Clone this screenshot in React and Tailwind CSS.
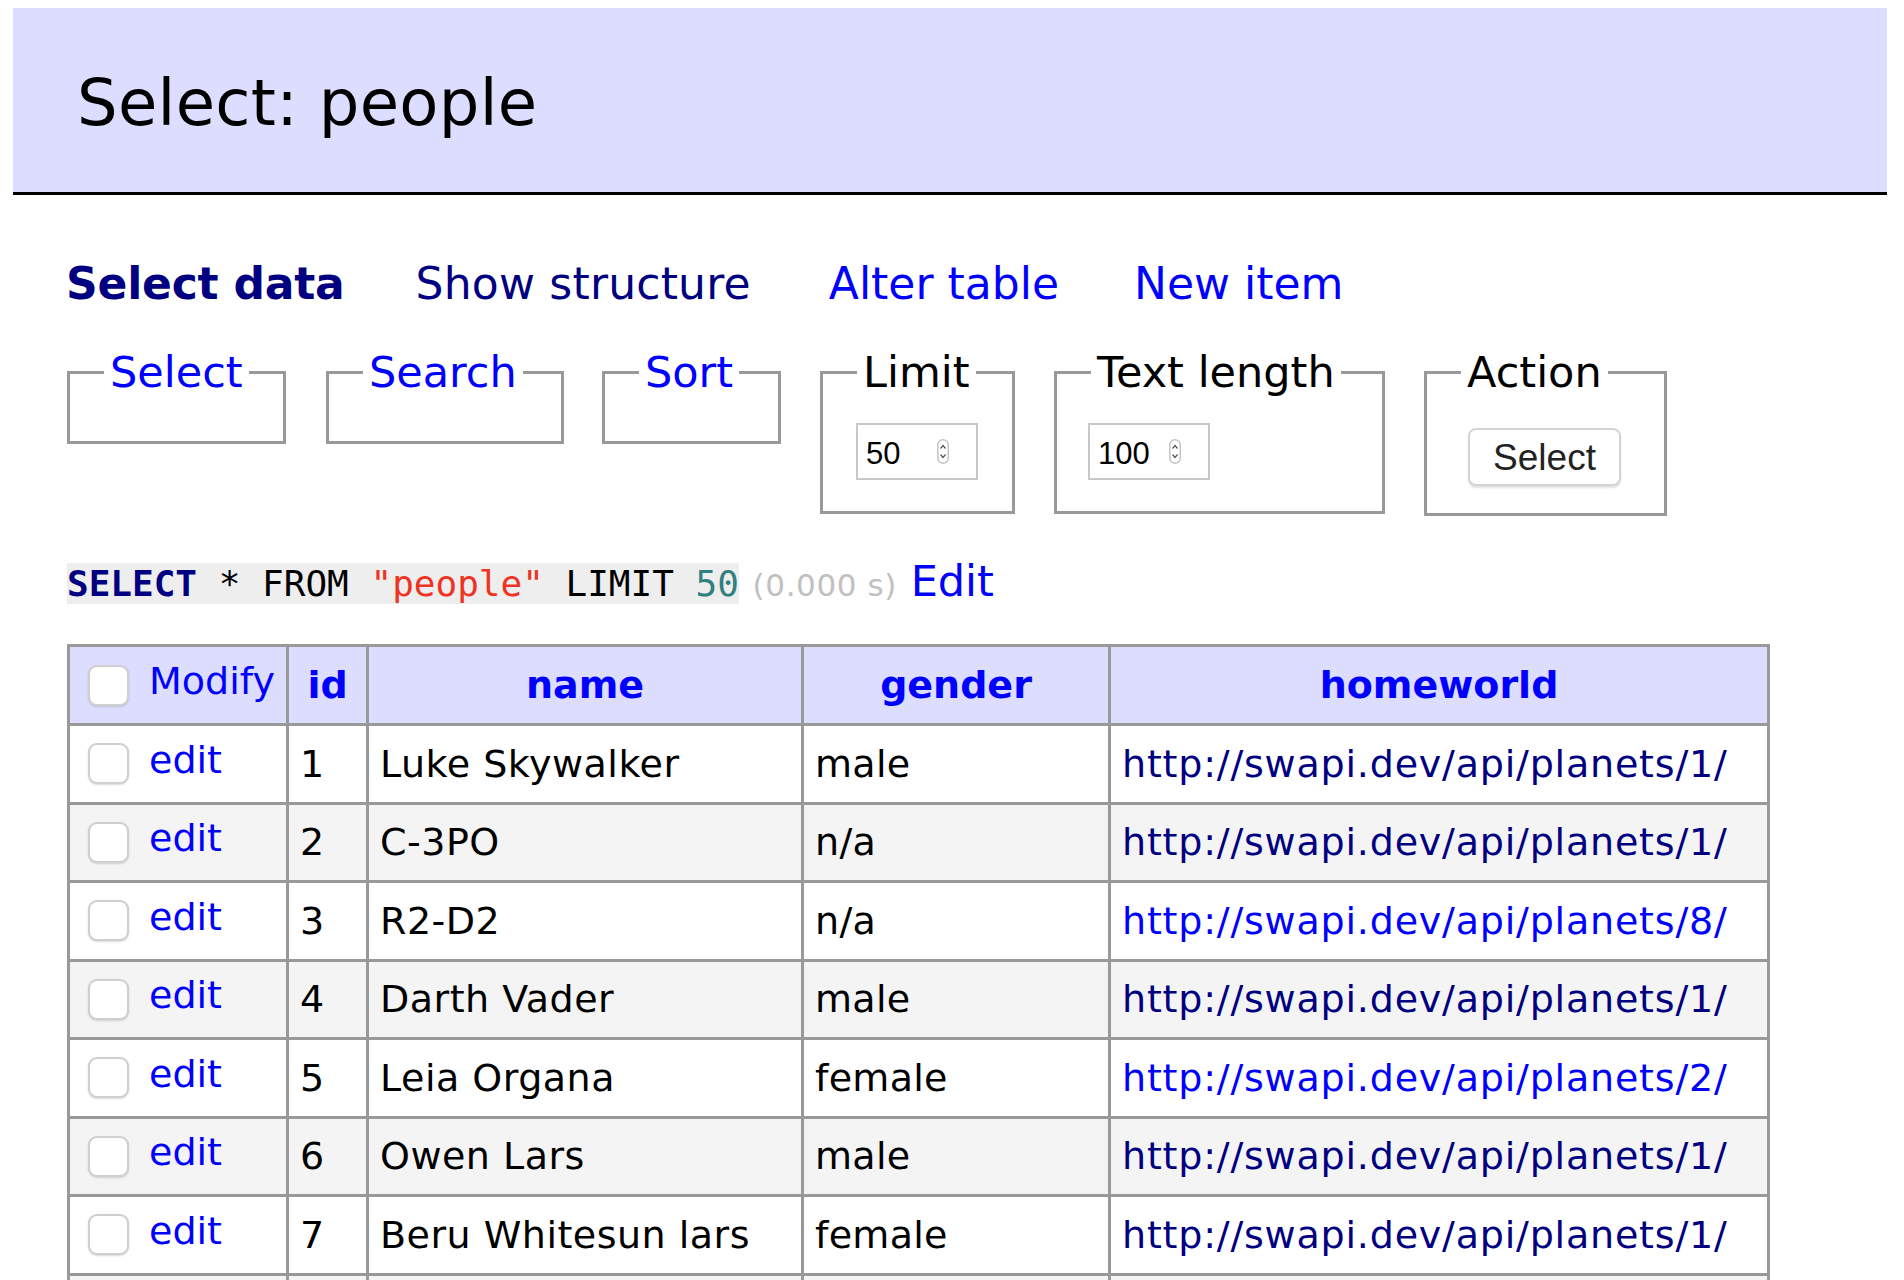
import React from 'react';

const rows = [
  { id: 1, name: 'Luke Skywalker', gender: 'male', planet: 1, visited: true },
  { id: 2, name: 'C-3PO', gender: 'n/a', planet: 1, visited: true },
  { id: 3, name: 'R2-D2', gender: 'n/a', planet: 8, visited: false },
  { id: 4, name: 'Darth Vader', gender: 'male', planet: 1, visited: true },
  { id: 5, name: 'Leia Organa', gender: 'female', planet: 2, visited: false },
  { id: 6, name: 'Owen Lars', gender: 'male', planet: 1, visited: true },
  { id: 7, name: 'Beru Whitesun lars', gender: 'female', planet: 1, visited: true },
  { id: 8, name: 'Biggs Darklighter', gender: 'male', planet: 1, visited: true },
];

const Checkbox = () => (
  <input
    type="checkbox"
    className="appearance-none block shrink-0 w-[41px] h-[41px] rounded-[9px] border-[2px] border-[#cfcfcf] bg-white shadow-[0_1px_2px_rgba(0,0,0,0.15)]"
  />
);

const Spinner = () => (
  <svg width="12" height="25" viewBox="0 0 12 25" className="shrink-0">
    <rect x="0.75" y="0.75" width="10.5" height="23.5" rx="5.25" fill="#fff" stroke="#c4c4c4" strokeWidth="1.5" />
    <path d="M3.5 9.5 L6 6.5 L8.5 9.5" fill="none" stroke="#555" strokeWidth="1.2" />
    <path d="M3.5 15.5 L6 18.5 L8.5 15.5" fill="none" stroke="#555" strokeWidth="1.2" />
  </svg>
);

const NumberBox = ({ value }) => (
  <div className="mt-[3px] w-[122px] h-[57px] border-[2px] border-[#c8c8c8] flex items-center pl-[8px] pr-[27px] justify-between font-['Liberation_Sans',Arial,sans-serif] text-[31px] text-black">
    <span className="pt-[6px]">{value}</span>
    <Spinner />
  </div>
);

const Fieldset = ({ legend, link, width, children }) => (
  <fieldset className={`${width} shrink-0 border-[3px] border-[#999] px-[34px] pt-[21px] pb-[21px]`}>
    <legend className={`px-[6px] text-[43px] leading-[54px] ${link ? 'text-[#0000ff]' : 'text-black'}`}>
      {legend}
    </legend>
    {children}
  </fieldset>
);

export default function App() {
  return (
    <div className="min-h-screen bg-white text-black font-['DejaVu_Sans',Verdana,sans-serif]">
      {/* Title */}
      <div className="pt-[8px] pl-[13px]">
        <h2 className="w-[1874px] h-[187px] bg-[#ddf] border-b-[3px] border-black pl-[64px] pt-[58px] text-[64px] leading-[74px] font-normal tracking-[0.3px]">
          Select: people
        </h2>
      </div>

      <div className="pl-[67px] pb-[40px]">
        {/* Links */}
        <div className="mt-[63px] flex text-[44px] leading-[52px] -ml-[1px]">
          <a className="font-bold text-[#000080] mr-[71px] tracking-[-0.2px]">Select data</a>
          <a className="text-[#000080] mr-[78px] tracking-[0.2px]">Show structure</a>
          <a className="text-[#0000ff] mr-[75px]">Alter table</a>
          <a className="text-[#0000ff]">New item</a>
        </div>

        {/* Select form */}
        <div className="mt-[35px] flex items-start">
          <div className="mr-[40px]"><Fieldset legend="Select" link width="w-[219px]" /></div>
          <div className="mr-[38px]"><Fieldset legend="Search" link width="w-[238px]" /></div>
          <div className="mr-[39px]"><Fieldset legend="Sort" link width="w-[179px]" /></div>
          <div className="mr-[39px]">
            <Fieldset legend="Limit" width="w-[195px]">
              <div className="h-[67px] -ml-[1px]">
                <NumberBox value="50" />
              </div>
            </Fieldset>
          </div>
          <div className="mr-[39px]">
            <Fieldset legend="Text length" width="w-[331px]">
              <div className="h-[67px] -ml-[3px]">
                <NumberBox value="100" />
              </div>
            </Fieldset>
          </div>
          <Fieldset legend="Action" width="w-[243px]">
            <div className="h-[72px] pl-[7px]">
              <button className="mt-[8px] w-[153px] h-[58px] rounded-[8px] border-[2px] border-[#d4d4d4] bg-white shadow-[0_2px_2px_rgba(0,0,0,0.12)] font-['Liberation_Sans',Arial,sans-serif] text-[37px] text-[#222]">
                Select
              </button>
            </div>
          </Fieldset>
        </div>

        {/* Query */}
        <div className="mt-[38px] text-[43px] leading-[54px] whitespace-nowrap">
          <code className="bg-[#eee] font-['DejaVu_Sans_Mono',monospace] text-[36px] leading-none">
            <span className="font-bold text-[#000080]">SELECT</span> * FROM{' '}
            <span className="text-[#ee3322]">"people"</span> LIMIT{' '}
            <span className="text-[#318080]">50</span>
          </code>{' '}
          <span className="text-[31px] leading-none text-[#c0c0c0] tracking-[0.6px]">(0.000 s)</span>{' '}
          <a className="text-[#0000ff]">Edit</a>
        </div>

        {/* Data table */}
        <table className="mt-[36px] border-collapse text-[38px] leading-none">
          <thead>
            <tr className="bg-[#ddf]">
              <td className="border-[3px] border-[#999] p-0">
                <div className="w-[216px] h-[76px] flex items-center pl-[18px] gap-[20px]">
                  <Checkbox />
                  <a className="text-[#0000ff] pb-[8px]">Modify</a>
                </div>
              </td>
              {[
                ['id', 'w-[77px]'],
                ['name', 'w-[432px]'],
                ['gender', 'w-[304px]'],
                ['homeworld', 'w-[656px]'],
              ].map(([label, w]) => (
                <th key={label} className="border-[3px] border-[#999] p-0">
                  <div className={`${w} h-[76px] flex items-center justify-center font-bold text-[#0000ff]`}>
                    {label}
                  </div>
                </th>
              ))}
            </tr>
          </thead>
          <tbody>
            {rows.map((r, i) => (
              <tr key={r.id} className={i % 2 === 1 ? 'bg-[#f4f4f4]' : 'bg-white'}>
                <td className="border-[3px] border-[#999] p-0">
                  <div className="w-[216px] h-[75.5px] flex items-center pl-[18px] gap-[20px]">
                    <Checkbox />
                    <a className="text-[#0000ff] pb-[8px]">edit</a>
                  </div>
                </td>
                <td className="border-[3px] border-[#999] p-0">
                  <div className="w-[77px] h-[75.5px] flex items-center pl-[11px]">{r.id}</div>
                </td>
                <td className="border-[3px] border-[#999] p-0">
                  <div className="w-[432px] h-[75.5px] flex items-center pl-[11px] tracking-[0.5px]">{r.name}</div>
                </td>
                <td className="border-[3px] border-[#999] p-0">
                  <div className="w-[304px] h-[75.5px] flex items-center pl-[11px] tracking-[0.3px]">{r.gender}</div>
                </td>
                <td className="border-[3px] border-[#999] p-0">
                  <div className="w-[656px] h-[75.5px] flex items-center pl-[11px]">
                    <a className={`tracking-[0.8px] ${r.visited ? 'text-[#000080]' : 'text-[#0000ff]'}`}>
                      http://swapi.dev/api/planets/{r.planet}/
                    </a>
                  </div>
                </td>
              </tr>
            ))}
          </tbody>
        </table>
      </div>
    </div>
  );
}
